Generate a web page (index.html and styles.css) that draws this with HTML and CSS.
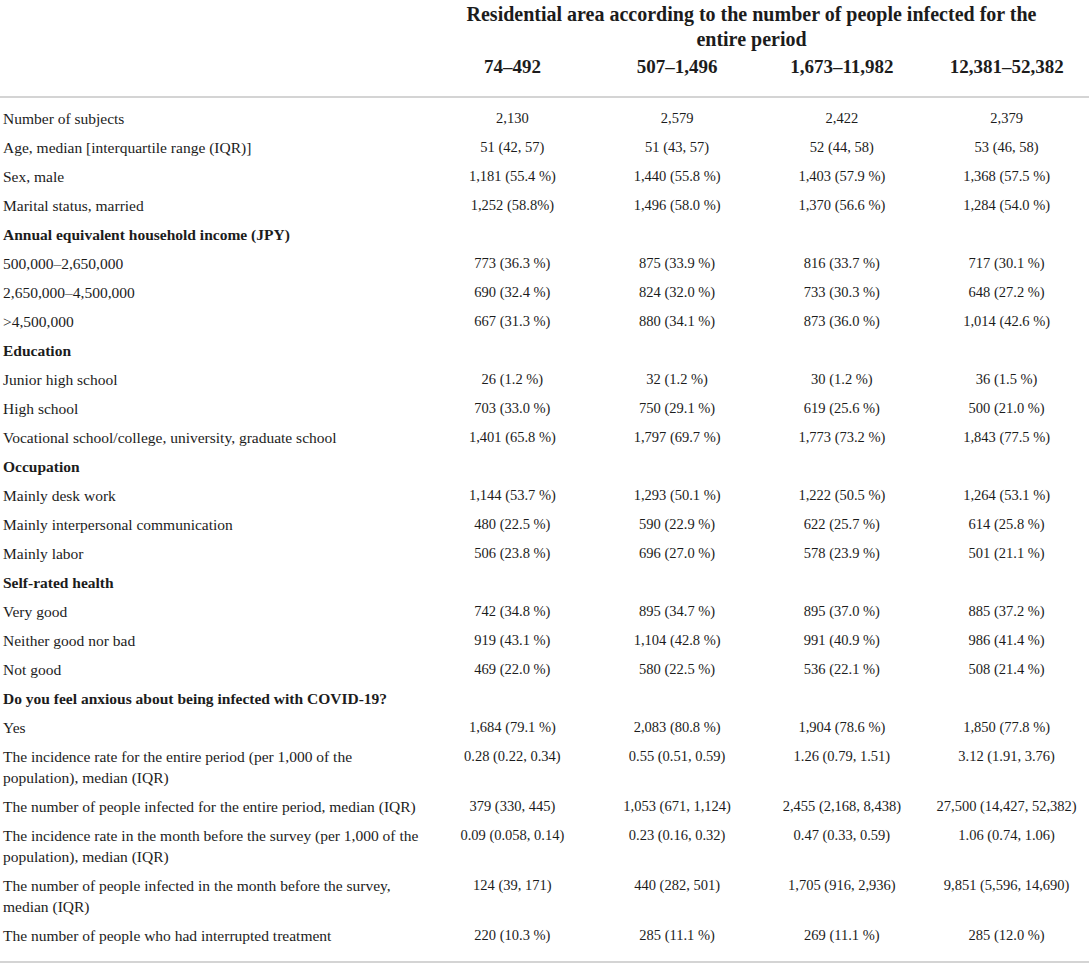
FILE: index.html
```html
<!DOCTYPE html>
<html lang="en">
<head>
<meta charset="UTF-8">
<meta name="viewport" content="width=device-width, initial-scale=1.0">
<title>Characteristics by residential area</title>
<link rel="stylesheet" href="styles.css">
</head>
<body>

<table class="stats">
    <colgroup>
        <col class="col-label">
        <col class="col-num">
        <col class="col-num">
        <col class="col-num">
        <col class="col-num">
    </colgroup>
    <thead>
        <tr>
            <th></th>
            <th colspan="4" class="group-head">Residential area according to the number of people infected for the<br>entire period</th>
        </tr>
        <tr class="range-row">
            <th></th>
            <th>74–492</th>
            <th>507–1,496</th>
            <th>1,673–11,982</th>
            <th>12,381–52,382</th>
        </tr>
    </thead>
    <tbody>
        <tr><td>Number of subjects</td><td>2,130</td><td>2,579</td><td>2,422</td><td>2,379</td></tr>
        <tr><td>Age, median [interquartile range (IQR)]</td><td>51 (42, 57)</td><td>51 (43, 57)</td><td>52 (44, 58)</td><td>53 (46, 58)</td></tr>
        <tr><td>Sex, male</td><td>1,181 (55.4 %)</td><td>1,440 (55.8 %)</td><td>1,403 (57.9 %)</td><td>1,368 (57.5 %)</td></tr>
        <tr><td>Marital status, married</td><td>1,252 (58.8%)</td><td>1,496 (58.0 %)</td><td>1,370 (56.6 %)</td><td>1,284 (54.0 %)</td></tr>

        <tr class="section"><td colspan="5">Annual equivalent household income (JPY)</td></tr>
        <tr><td>500,000–2,650,000</td><td>773 (36.3 %)</td><td>875 (33.9 %)</td><td>816 (33.7 %)</td><td>717 (30.1 %)</td></tr>
        <tr><td>2,650,000–4,500,000</td><td>690 (32.4 %)</td><td>824 (32.0 %)</td><td>733 (30.3 %)</td><td>648 (27.2 %)</td></tr>
        <tr><td>&gt;4,500,000</td><td>667 (31.3 %)</td><td>880 (34.1 %)</td><td>873 (36.0 %)</td><td>1,014 (42.6 %)</td></tr>

        <tr class="section"><td colspan="5">Education</td></tr>
        <tr><td>Junior high school</td><td>26 (1.2 %)</td><td>32 (1.2 %)</td><td>30 (1.2 %)</td><td>36 (1.5 %)</td></tr>
        <tr><td>High school</td><td>703 (33.0 %)</td><td>750 (29.1 %)</td><td>619 (25.6 %)</td><td>500 (21.0 %)</td></tr>
        <tr><td>Vocational school/college, university, graduate school</td><td>1,401 (65.8 %)</td><td>1,797 (69.7 %)</td><td>1,773 (73.2 %)</td><td>1,843 (77.5 %)</td></tr>

        <tr class="section"><td colspan="5">Occupation</td></tr>
        <tr><td>Mainly desk work</td><td>1,144 (53.7 %)</td><td>1,293 (50.1 %)</td><td>1,222 (50.5 %)</td><td>1,264 (53.1 %)</td></tr>
        <tr><td>Mainly interpersonal communication</td><td>480 (22.5 %)</td><td>590 (22.9 %)</td><td>622 (25.7 %)</td><td>614 (25.8 %)</td></tr>
        <tr><td>Mainly labor</td><td>506 (23.8 %)</td><td>696 (27.0 %)</td><td>578 (23.9 %)</td><td>501 (21.1 %)</td></tr>

        <tr class="section"><td colspan="5">Self-rated health</td></tr>
        <tr><td>Very good</td><td>742 (34.8 %)</td><td>895 (34.7 %)</td><td>895 (37.0 %)</td><td>885 (37.2 %)</td></tr>
        <tr><td>Neither good nor bad</td><td>919 (43.1 %)</td><td>1,104 (42.8 %)</td><td>991 (40.9 %)</td><td>986 (41.4 %)</td></tr>
        <tr><td>Not good</td><td>469 (22.0 %)</td><td>580 (22.5 %)</td><td>536 (22.1 %)</td><td>508 (21.4 %)</td></tr>

        <tr class="section"><td colspan="5">Do you feel anxious about being infected with COVID-19?</td></tr>
        <tr><td>Yes</td><td>1,684 (79.1 %)</td><td>2,083 (80.8 %)</td><td>1,904 (78.6 %)</td><td>1,850 (77.8 %)</td></tr>
        <tr><td>The incidence rate for the entire period (per 1,000 of the<br>population), median (IQR)</td><td>0.28 (0.22, 0.34)</td><td>0.55 (0.51, 0.59)</td><td>1.26 (0.79, 1.51)</td><td>3.12 (1.91, 3.76)</td></tr>
        <tr><td>The number of people infected for the entire period, median (IQR)</td><td>379 (330, 445)</td><td>1,053 (671, 1,124)</td><td>2,455 (2,168, 8,438)</td><td>27,500 (14,427, 52,382)</td></tr>
        <tr><td>The incidence rate in the month before the survey (per 1,000 of the<br>population), median (IQR)</td><td>0.09 (0.058, 0.14)</td><td>0.23 (0.16, 0.32)</td><td>0.47 (0.33, 0.59)</td><td>1.06 (0.74, 1.06)</td></tr>
        <tr><td>The number of people infected in the month before the survey,<br>median (IQR)</td><td>124 (39, 171)</td><td>440 (282, 501)</td><td>1,705 (916, 2,936)</td><td>9,851 (5,596, 14,690)</td></tr>
        <tr><td>The number of people who had interrupted treatment</td><td>220 (10.3 %)</td><td>285 (11.1 %)</td><td>269 (11.1 %)</td><td>285 (12.0 %)</td></tr>
    </tbody>
</table>

</body>
</html>
```

FILE: styles.css
```css
body {
    margin: 0;
    background-color: white;
    color: #1c1c1c;
    font-family: "Liberation Serif", "Times New Roman", serif;
}

.stats {
    width: 100%;
    table-layout: fixed;
    border-collapse: collapse;
    border-bottom: 2px solid #d4d4d4;
}

.col-label {
    width: 430px;
}

th {
    font-weight: bold;
    font-size: 19px;
    line-height: 25px;
    text-align: center;
    padding: 2px 4px;
}

.group-head {
    font-size: 20px;
    padding: 2px 20px 0 4px;
}

.range-row th {
    padding-bottom: 17px;
    border-bottom: 2px solid #d4d4d4;
}

td {
    font-size: 14.5px;
    line-height: 21px;
    text-align: center;
    vertical-align: top;
    padding: 4px 4px;
}

td:first-child {
    font-size: 15.5px;
    text-align: left;
    padding-left: 3px;
}

tbody tr:first-child td {
    padding-top: 10px;
}

tbody tr:last-child td {
    padding-bottom: 15px;
}

.section td {
    font-weight: bold;
}
```
